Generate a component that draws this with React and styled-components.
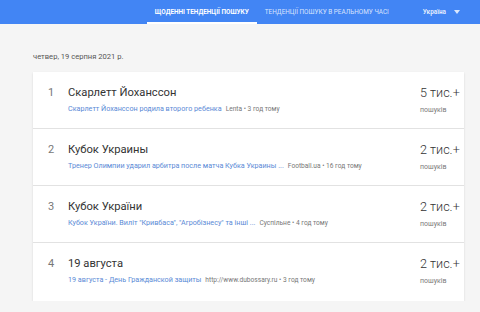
import React from 'react';
import styled, { createGlobalStyle } from 'styled-components';

const GlobalStyle = createGlobalStyle`
  body {
    margin: 0;
    background: #f5f5f5;
    font-family: Roboto, "Liberation Sans", sans-serif;
  }
`;

const Header = styled.div`
  height: 24px;
  background: #4285f4;
  display: flex;
  justify-content: flex-end;
  padding-right: 12px;
  box-sizing: border-box;
`;

const Tab = styled.div`
  height: 24px;
  box-sizing: border-box;
  padding: 0 8px;
  display: flex;
  align-items: center;
  font-size: 6.4px;
  font-weight: ${p => (p.active ? 700 : 400)};
  color: ${p => (p.active ? '#fff' : 'rgba(255,255,255,0.8)')};
  border-bottom: 2px solid ${p => (p.active ? '#fff' : 'transparent')};
  border-top: 2px solid transparent;
  white-space: nowrap;
`;

const Country = styled(Tab)`
  margin-left: 18px;
  gap: 8px;
  font-weight: 700;
  color: rgba(255, 255, 255, 0.85);
  &::after {
    content: '';
    border-style: solid;
    border-width: 4px 3px 0 3px;
    border-color: rgba(255, 255, 255, 0.8) transparent transparent transparent;
  }
`;

const Main = styled.div`
  padding: 26px 16px 0 33px;
`;

const DateLine = styled.div`
  font-size: 7.6px;
  color: #555;
  line-height: 14px;
  margin-bottom: 8px;
`;

const Card = styled.div`
  background: #fff;
  box-shadow: 0 1px 2px rgba(0, 0, 0, 0.12);
`;

const Row = styled.div`
  display: flex;
  height: 57px;
  box-sizing: border-box;
  border-bottom: 1px solid #e2e2e2;
  &:last-child {
    border-bottom: none;
    height: 58px;
  }
`;

const Index = styled.div`
  width: 20px;
  padding: 14px 0 0 15px;
  font-size: 11px;
  line-height: 14px;
  color: #777;
`;

const Body = styled.div`
  flex: 1;
  min-width: 0;
  padding-top: 14px;
`;

const Title = styled.div`
  font-size: 11.2px;
  line-height: 14px;
  color: #333;
`;

const Sub = styled.div`
  margin-top: 4px;
  font-size: 7.2px;
  line-height: 10px;
  white-space: nowrap;
  color: #5a8ad6;
`;

const Source = styled.span`
  color: #777;
  margin-left: 4px;
  font-size: 6.6px;
`;

const Count = styled.div`
  width: 44px;
  padding-top: 13px;
`;

const Num = styled.div`
  font-size: 12.6px;
  font-weight: 300;
  line-height: 16px;
  color: #333;
  white-space: nowrap;
`;

const Label = styled.div`
  margin-top: 4px;
  font-size: 7px;
  line-height: 10px;
  color: #7a7a7a;
`;

const items = [
  { n: 1, title: 'Скарлетт Йоханссон', sub: 'Скарлетт Йоханссон родила второго ребенка', src: 'Lenta • 3 год тому', count: '5 тис.+' },
  { n: 2, title: 'Кубок Украины', sub: 'Тренер Олимпии ударил арбитра после матча Кубка Украины ...', src: 'Football.ua • 16 год тому', count: '2 тис.+' },
  { n: 3, title: 'Кубок України', sub: 'Кубок України. Виліт "Кривбаса", "Агробізнесу" та інші ...', src: 'Суспільне • 4 год тому', count: '2 тис.+' },
  { n: 4, title: '19 августа', sub: '19 августа - День Гражданской защиты', src: 'http://www.dubossary.ru • 3 год тому', count: '2 тис.+' },
];

export default function App() {
  return (
    <>
      <GlobalStyle />
      <Header>
        <Tab active>ЩОДЕННІ ТЕНДЕНЦІЇ ПОШУКУ</Tab>
        <Tab>ТЕНДЕНЦІЇ ПОШУКУ В РЕАЛЬНОМУ ЧАСІ</Tab>
        <Country>Україна</Country>
      </Header>
      <Main>
        <DateLine>четвер, 19 серпня 2021 р.</DateLine>
        <Card>
          {items.map(it => (
            <Row key={it.n}>
              <Index>{it.n}</Index>
              <Body>
                <Title>{it.title}</Title>
                <Sub>
                  {it.sub}
                  <Source>{it.src}</Source>
                </Sub>
              </Body>
              <Count>
                <Num>{it.count}</Num>
                <Label>пошуків</Label>
              </Count>
            </Row>
          ))}
        </Card>
      </Main>
    </>
  );
}
